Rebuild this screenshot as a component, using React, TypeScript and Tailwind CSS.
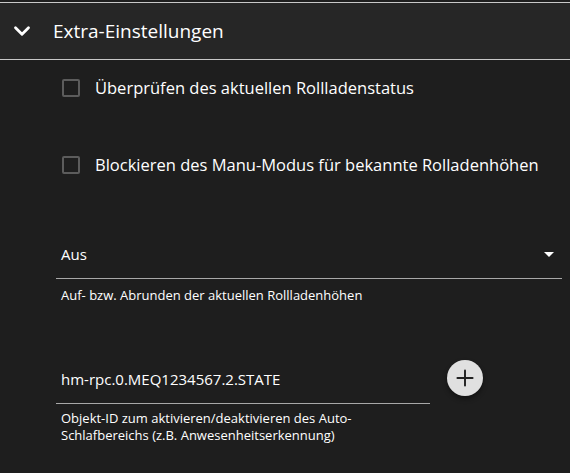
import { ChevronDown, Plus } from 'lucide-react'

function CheckRow({ label }: { label: string }) {
  return (
    <label className="flex items-center gap-[15px] pl-[62px]">
      <span className="block h-[18px] w-[18px] rounded-[2px] border-2 border-[#5c5c5c]" />
      <span className="text-[16.5px] leading-[24px] text-white">{label}</span>
    </label>
  )
}

export default function App() {
  return (
    <div className="h-[473px] w-[570px] overflow-hidden bg-[#1e1e1e] pt-[2px] font-['Open_Sans',sans-serif] text-white">
      {/* Accordion header */}
      <div className="flex h-[58px] items-center border-y border-[#c8c8c8] bg-[#262626]">
        <ChevronDown className="ml-[9px] h-[26px] w-[26px] text-white" strokeWidth={2.6} />
        <span className="ml-[18px] text-[19px]">Extra-Einstellungen</span>
      </div>

      <div className="flex flex-col">
        <div className="pt-[16px]">
          <CheckRow label="Überprüfen des aktuellen Rollladenstatus" />
        </div>
        <div className="pt-[53px]">
          <CheckRow label="Blockieren des Manu-Modus für bekannte Rolladenhöhen" />
        </div>

        {/* Select */}
        <div className="ml-[56px] mr-[8px] mt-[54px]">
          <div className="flex h-[48px] items-center justify-between border-b border-[#a8a8a8] pl-[5px] pr-[8px]">
            <span className="text-[15px]">Aus</span>
            <span className="h-0 w-0 border-x-[5px] border-t-[5px] border-x-transparent border-t-white" />
          </div>
          <p className="pl-[5px] pt-[7px] text-[13px] leading-[18px]">Auf- bzw. Abrunden der aktuellen Rollladenhöhen</p>
        </div>

        {/* Object ID */}
        <div className="ml-[56px] mt-[52px] flex items-start gap-[17px]">
          <div className="w-[374px]">
            <div className="flex h-[48px] items-center border-b border-[#a8a8a8] pl-[5px]">
              <span className="text-[15px]">hm-rpc.0.MEQ1234567.2.STATE</span>
            </div>
            <p className="pl-[5px] pr-[8px] pt-[6px] text-[13px] leading-[17px]">
              Objekt-ID zum aktivieren/deaktivieren des Auto-Schlafbereichs (z.B. Anwesenheitserkennung)
            </p>
          </div>
          <button className="mt-[4px] flex h-[36px] w-[36px] items-center justify-center rounded-full bg-[#e0e0e0] shadow-[0_3px_5px_rgba(0,0,0,0.4)]">
            <Plus className="h-[26px] w-[26px] text-[#222]" strokeWidth={1.8} />
          </button>
        </div>
      </div>
    </div>
  )
}
